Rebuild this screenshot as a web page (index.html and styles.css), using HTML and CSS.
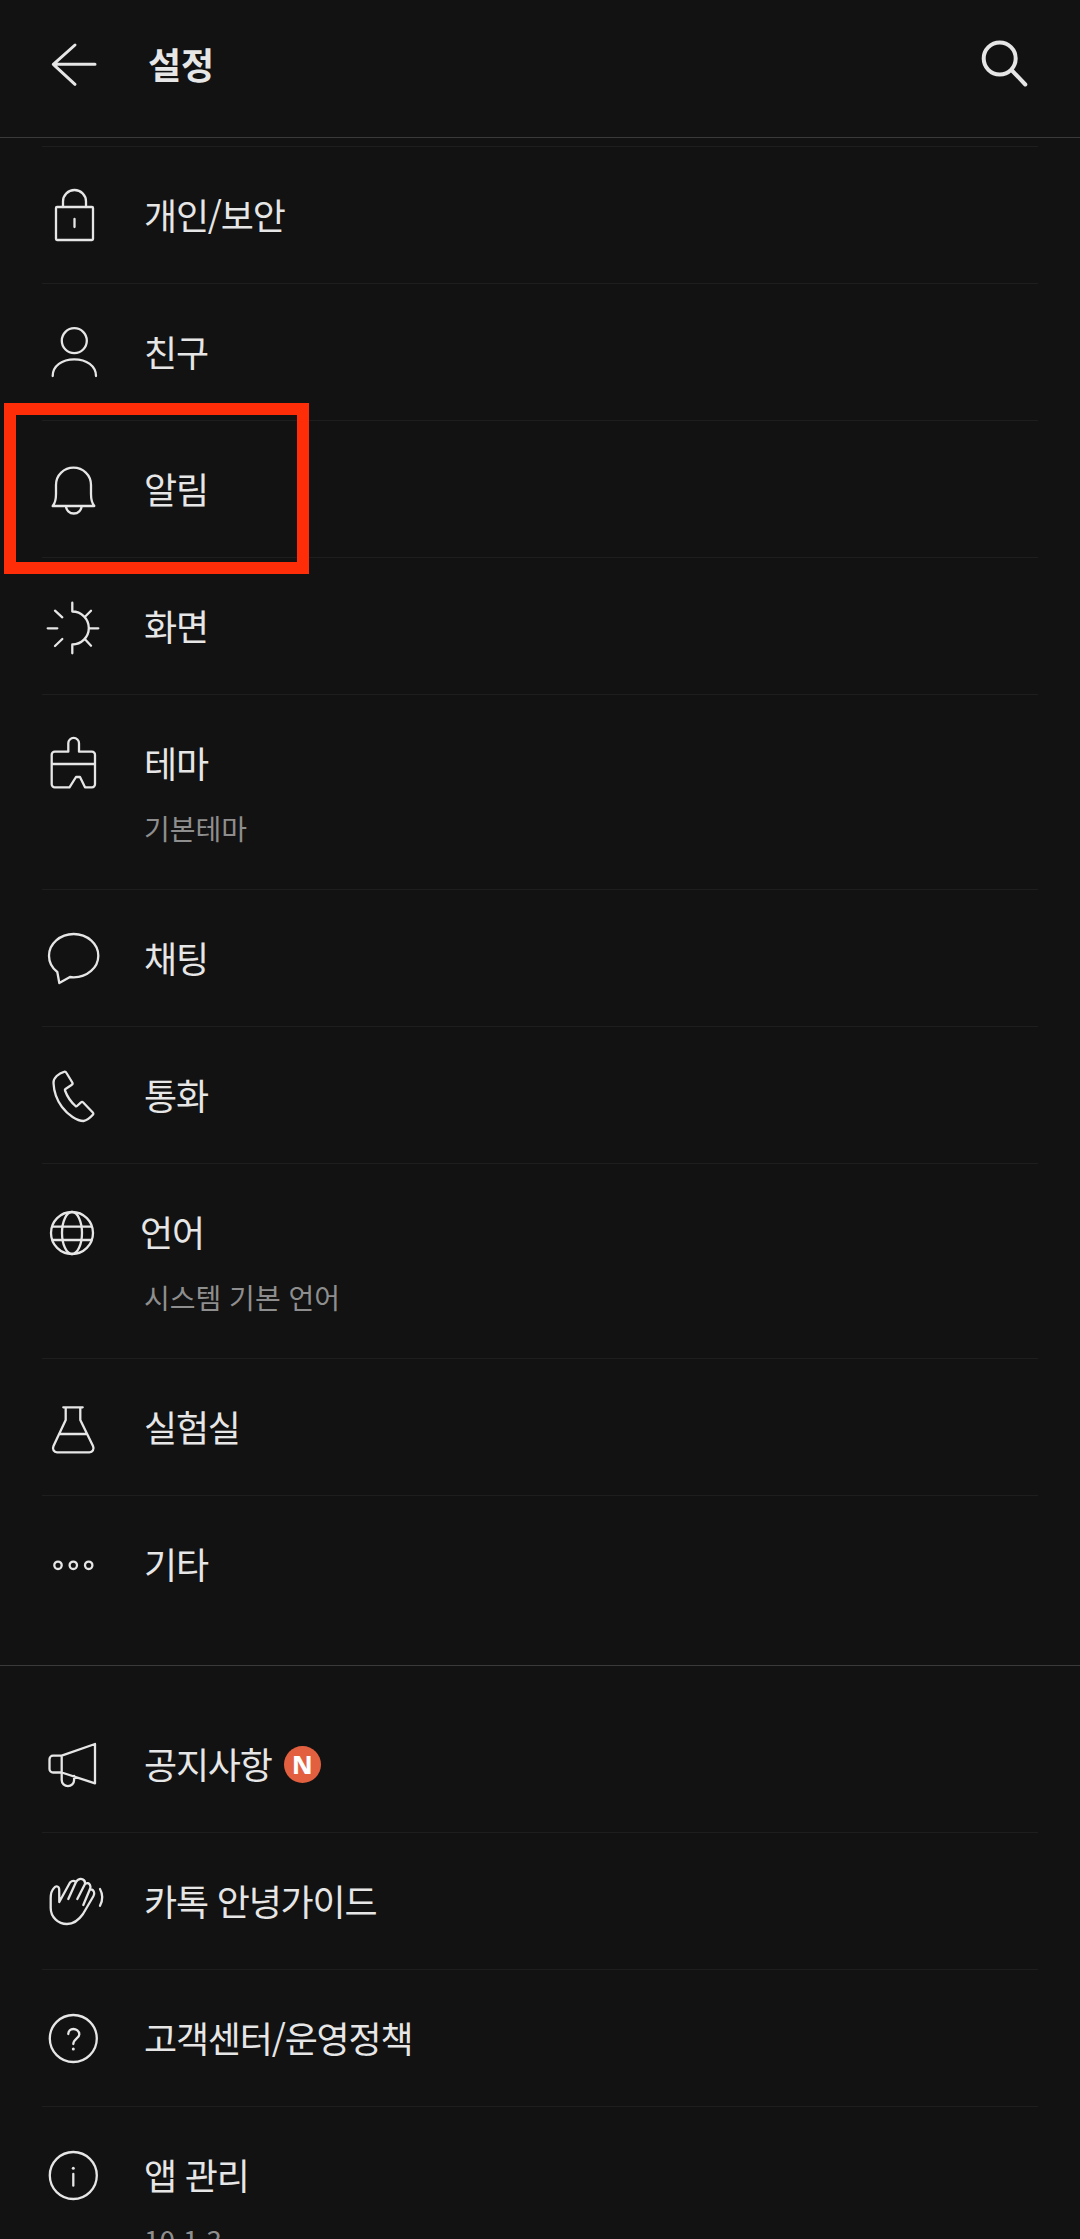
FILE: index.html
```html
<!DOCTYPE html>
<html lang="ko">
<head>
    <title>설정</title>
    <meta name="viewport" content="width=device-width, initial-scale=1">
    <link rel="stylesheet" href="styles.css">
</head>
<body>
    <header class="topbar">
        <svg class="icon" viewBox="0 0 62 62"><path class="thick" d="M53 31.3H11.3M33 12L11.3 31.3L33 51.3"/></svg>
        <h1>설정</h1>
        <svg class="icon search" viewBox="0 0 60 60"><circle class="bold" cx="26.7" cy="25.5" r="16"/><path class="bold" d="M39 37.5L52.3 51.5"/></svg>
    </header>

    <ul class="menu first">
        <li class="row">
            <div class="row-main">
                <svg class="icon" viewBox="0 0 62 62"><rect x="14" y="23" width="37" height="33" rx="1"/><path d="M21 23V17.5a11.5 11.5 0 0 1 23 0V23M32.5 35V43"/></svg>
                <span class="label">개인/보안</span>
            </div>
        </li>
        <li class="row">
            <div class="row-main">
                <svg class="icon" viewBox="0 0 62 62"><circle cx="32.3" cy="19.7" r="12.5"/><path d="M10.7 55C10.7 45 20 38.3 32.3 38.3S54 45 54 55"/></svg>
                <span class="label">친구</span>
            </div>
        </li>
        <li class="row">
            <div class="row-main">
                <svg class="icon" viewBox="0 0 62 62"><path d="M10.7 48H52.3C49 44 49 40 49 36V27C49 17 41 9.7 31.5 9.7S14 17 14 27V36C14 40 14 44 10.7 48ZM24 48a7.8 7.5 0 0 0 15.6 0"/></svg>
                <span class="label">알림</span>
            </div>
        </li>
        <li class="row">
            <div class="row-main">
                <svg class="icon" viewBox="0 0 62 62"><path d="M30.3 7.7V16.5A16.5 16.5 0 0 1 30.3 49.5V58.3M48 33.3H56.3M5.7 33.3H15.3M43 21.7L49 15.7M43 44.3L49 50.7M13 15.7L20.3 22.3M13 51L20.3 44"/></svg>
                <span class="label">화면</span>
            </div>
        </li>
        <li class="row">
            <div class="row-main">
                <svg class="icon" viewBox="0 0 62 62"><path d="M26.3 19.7V11.3a5.35 5.35 0 0 1 10.7 0V19.7H50a3 3 0 0 1 3 3V52.3a3 3 0 0 1-3 3H43L38 45H34L27.5 55.3H12.7a3 3 0 0 1-3-3V22.7a3 3 0 0 1 3-3ZM9.7 32H53"/></svg>
                <span class="label">테마</span>
            </div>
            <div class="row-sub">기본테마</div>
        </li>
        <li class="row">
            <div class="row-main">
                <svg class="icon" viewBox="0 0 62 62"><path d="M15.3 45L17.3 56L28 50C29 50.2 30.5 50.3 31.7 50.3C45.3 50.3 56.3 40.6 56.3 28.7S45.3 7 31.7 7S7 16.8 7 28.7C7 35.5 10.2 41 15.3 45Z"/></svg>
                <span class="label">채팅</span>
            </div>
        </li>
        <li class="row">
            <div class="row-main">
                <svg class="icon" viewBox="0 0 62 62"><path d="M11.5 19C11 14 17 9 22 7.8C23 7.5 24 8 24.5 9L30.3 18.5C30.8 19.5 30.5 20.5 29.5 21L23.5 25C23 25.4 22.8 26 23 26.5C25 32 29 38 33.5 42C34 42.4 34.6 42.4 35 42L39 38.3C39.6 37.7 40.5 37.7 41 38.3L50.8 48.5C51.5 49.2 51.5 50.2 50.8 50.8C48 54 44.5 56.5 41.5 57C35 57 26 51 20 43C14 35 11.8 26 11.5 19Z"/></svg>
                <span class="label">통화</span>
            </div>
        </li>
        <li class="row">
            <div class="row-main">
                <svg class="icon" viewBox="0 0 62 62"><circle cx="30" cy="32" r="21"/><ellipse cx="30" cy="32" rx="10" ry="21"/><path d="M10.5 25.7H49.5M10.5 39H49.5"/></svg>
                <span class="label lang">언어</span>
            </div>
            <div class="row-sub">시스템 기본 언어</div>
        </li>
        <li class="row">
            <div class="row-main">
                <svg class="icon" viewBox="0 0 62 62"><path d="M21.3 11.3H40.7M38.3 11.3V24L51 50C52.5 53.3 50.5 56.3 47.5 56.3H15C12 56.3 10 53.3 11.5 50L23.7 24V11.3M17.5 38H45"/></svg>
                <span class="label">실험실</span>
            </div>
        </li>
        <li class="row">
            <div class="row-main">
                <svg class="icon" viewBox="0 0 62 62"><circle cx="16" cy="32.3" r="3.7"/><circle cx="31.3" cy="32.3" r="3.7"/><circle cx="46.7" cy="32.3" r="3.7"/></svg>
                <span class="label">기타</span>
            </div>
        </li>
    </ul>

    <ul class="menu second">
        <li class="row">
            <div class="row-main">
                <svg class="icon" viewBox="0 0 62 62"><path d="M53 11L19.7 22.7H11a3.5 3.5 0 0 0-3.5 3.5V36a3.5 3.5 0 0 0 3.5 3.5H19.7L53 50.3ZM19.7 22.7V47a6.2 6.2 0 0 0 12.4 0V43"/></svg>
                <span class="label">공지사항</span>
                <span class="badge">N</span>
            </div>
        </li>
        <li class="row">
            <div class="row-main">
                <svg class="icon" viewBox="0 0 62 62"><path d="M17.3 32L28 12.5Q31 9.5 34 12L26.3 29M33.5 12.5Q37 7.5 41 9.5Q43.5 11 43 14L35.3 29M43 14Q46.5 12 48 15Q49 17 48 19L41.3 35M47.7 19.5Q51 19 52 22Q52.7 24 51.5 26L41 44Q34 54 25 54C16 54 8.7 47 8.7 38V28C8.7 24 10 20 12 18C14 15.5 17 16 17.2 19.5L17.3 32M58 19Q62.5 27.3 58 35.7"/></svg>
                <span class="label">카톡 안녕가이드</span>
            </div>
        </li>
        <li class="row">
            <div class="row-main">
                <svg class="icon" viewBox="0 0 62 62"><circle cx="31.3" cy="31.5" r="23.5"/><path d="M26.3 27C26.3 24 28.5 22 31.3 22S37.3 24 37.3 27.5C37.3 31 31.3 32 31.3 37"/><circle class="dot" cx="31.3" cy="42" r="1.5"/></svg>
                <span class="label">고객센터/운영정책</span>
            </div>
        </li>
        <li class="row">
            <div class="row-main">
                <svg class="icon" viewBox="0 0 62 62"><circle cx="31.3" cy="31.5" r="23.5"/><path d="M31.3 30V41.7"/><circle class="dot" cx="31.3" cy="24.3" r="1.5"/></svg>
                <span class="label">앱 관리</span>
            </div>
            <div class="row-sub">10.1.3</div>
        </li>
    </ul>

    <div class="highlight"></div>
</body>
</html>
```

FILE: styles.css
```css
html, body {
    margin: 0;
    height: 2239px;
    overflow: hidden;
}
body {
    background-color: #121212;
    color: #e6e6e6;
    font-family: "Noto Sans CJK KR", "Noto Sans", sans-serif;
    position: relative;
}
.topbar {
    display: flex;
    align-items: center;
    gap: 44px;
    height: 127px;
    padding: 0 47px 10px 42px;
    border-bottom: 1px solid #3a3a3a;
}
.topbar h1 {
    flex: 1;
    margin: -2px 0 0;
    font-size: 36px;
    font-weight: 700;
    line-height: 46px;
}
.icon {
    flex: none;
    width: 62px;
    height: 62px;
    overflow: visible;
    fill: none;
    stroke: #e6e6e6;
    stroke-width: 2.3;
    stroke-linecap: round;
    stroke-linejoin: round;
}
.icon .thick {
    stroke-width: 3;
}
.icon .bold {
    stroke-width: 4;
}
.icon .dot {
    fill: #e6e6e6;
    stroke: none;
}
.icon.search {
    width: 60px;
    height: 60px;
    margin-top: -2px;
}
.menu {
    list-style: none;
    margin: 0;
    padding: 0;
}
.menu.first {
    padding-top: 8px;
    padding-bottom: 33px;
    border-bottom: 1px solid #3a3a3a;
}
.menu.second {
    padding-top: 30px;
}
.row {
    margin-left: 42px;
    margin-right: 42px;
    padding: 45px 0;
    border-top: 1px solid #1e1e1e;
}
.menu.second .row:first-child {
    border-top: none;
}
.row-main {
    display: flex;
    align-items: center;
    gap: 40px;
    height: 46px;
}
.label {
    margin-top: -2px;
    font-size: 36px;
    line-height: 46px;
    letter-spacing: -1.2px;
}
.label.lang {
    margin-left: -4px;
}
.row-sub {
    margin: 22px 0 -4px 102px;
    font-size: 28px;
    line-height: 40px;
    color: #8e8e8e;
}
.badge {
    display: flex;
    align-items: center;
    justify-content: center;
    width: 37px;
    height: 37px;
    margin-left: -28px;
    border-radius: 50%;
    background-color: #e2603f;
    color: #fff;
    font-family: "Noto Sans", sans-serif;
    font-size: 25px;
    font-weight: 800;
}
.highlight {
    position: absolute;
    left: 4px;
    top: 403px;
    width: 281px;
    height: 147px;
    border: 12px solid #ff2d08;
}
```
